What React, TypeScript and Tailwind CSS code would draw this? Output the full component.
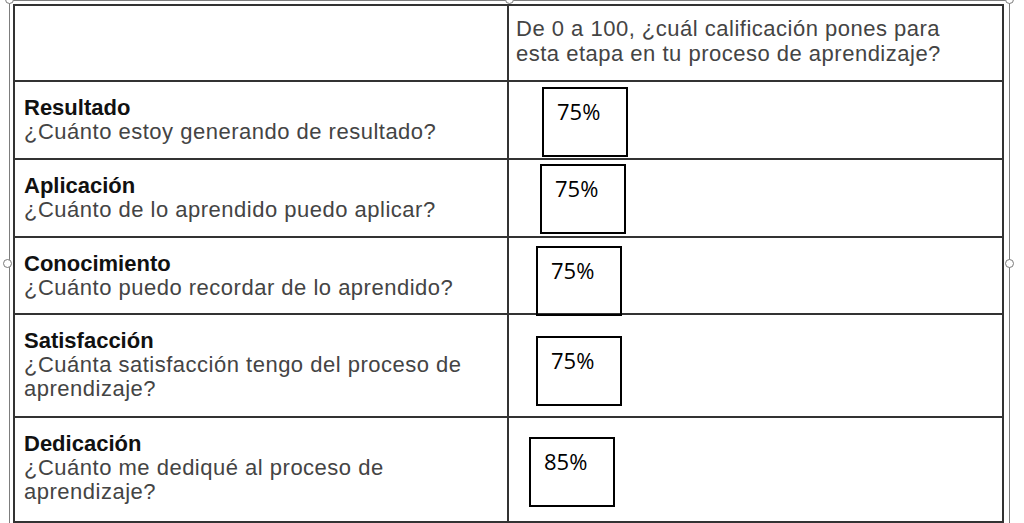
import React from 'react';

interface Row {
  label: string;
  question: React.ReactNode;
  value: string;
  height: string;
  box: string;
  last?: boolean;
}

const rows: Row[] = [
  {
    label: 'Resultado',
    question: '¿Cuánto estoy generando de resultado?',
    value: '75%',
    height: 'h-[78px]',
    box: 'ml-[33px] mt-[5px]',
  },
  {
    label: 'Aplicación',
    question: '¿Cuánto de lo aprendido puedo aplicar?',
    value: '75%',
    height: 'h-[78px]',
    box: 'ml-[31px] mt-[4px]',
  },
  {
    label: 'Conocimiento',
    question: '¿Cuánto puedo recordar de lo aprendido?',
    value: '75%',
    height: 'h-[77px]',
    box: 'ml-[27px] mt-[8px]',
  },
  {
    label: 'Satisfacción',
    question: (
      <>
        ¿Cuánta satisfacción tengo del proceso de
        <br />
        aprendizaje?
      </>
    ),
    value: '75%',
    height: 'h-[103px]',
    box: 'ml-[27px] mt-[21px]',
  },
  {
    label: 'Dedicación',
    question: (
      <>
        ¿Cuánto me dediqué al proceso de
        <br />
        aprendizaje?
      </>
    ),
    value: '85%',
    height: 'h-[103px]',
    box: 'ml-[20px] mt-[19px]',
    last: true,
  },
];

// Selection handle of the floating picture frame
const Handle = ({ className }: { className: string }) => (
  <span
    className={`absolute h-[9px] w-[9px] rounded-full border border-[#7a7a7a] bg-white ${className}`}
  />
);

export default function App() {
  return (
    <div className="relative h-[523px] w-[1024px] overflow-hidden bg-white font-['Liberation_Sans',Arial,sans-serif]">
      {/* picture selection frame */}
      <div className="pointer-events-none absolute left-[9px] top-0 h-[560px] w-[1001px] border border-[#7d7d7d]" />
      <Handle className="left-[5px] top-[-5px]" />
      <Handle className="left-[505px] top-[-5px]" />
      <Handle className="left-[1005px] top-[-5px]" />
      <Handle className="left-[3px] top-[259px]" />
      <Handle className="left-[1005px] top-[259px]" />

      <div className="relative ml-[13px] mt-[4px] w-[991px] border-2 border-[#333]">
        <div className="grid h-[76px] grid-cols-[494px_1fr] border-b-2 border-[#333]">
          <div className="border-r-2 border-[#333]" />
          <div className="pl-[7px] pt-[10px] text-[22px] leading-[25px] tracking-[0.5px] text-[#444]">
            De 0 a 100, ¿cuál calificación pones para
            <br />
            esta etapa en tu proceso de aprendizaje?
          </div>
        </div>

        {rows.map((row) => (
          <div
            key={row.label}
            className={`grid grid-cols-[494px_1fr] ${row.height} ${row.last ? '' : 'border-b-2 border-[#333]'}`}
          >
            <div className="border-r-2 border-[#333] pl-[9px] pt-[14px] text-[22px] leading-[24px]">
              <div className="font-bold text-[#111]">{row.label}</div>
              <div className="tracking-[0.5px] text-[#444]">{row.question}</div>
            </div>
            <div>
              <div
                className={`h-[70px] w-[86px] border-2 border-black pl-[13px] pt-[10px] font-['Open_Sans',sans-serif] text-[22px] leading-[24px] text-black ${row.box}`}
              >
                {row.value}
              </div>
            </div>
          </div>
        ))}
      </div>
    </div>
  );
}
